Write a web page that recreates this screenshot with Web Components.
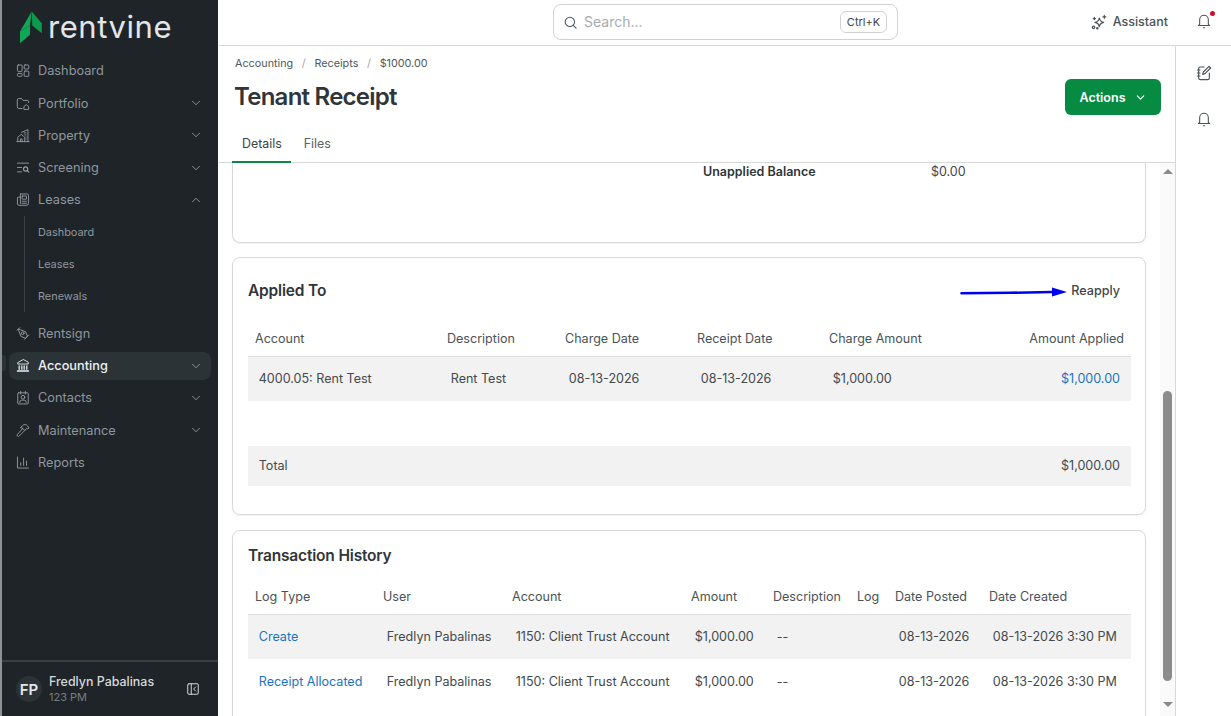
<!DOCTYPE html>
<html lang="en">
<head>
<meta charset="utf-8">
<title>Tenant Receipt</title>
<style>
  html, body { margin: 0; height: 100%; overflow: hidden; background: #fff; }
  body { font-family: Inter, "Liberation Sans", sans-serif; }
</style>
</head>
<body>
<rv-app>
  <rv-sidebar slot="sidebar">
    <rv-nav-item icon="dashboard">Dashboard</rv-nav-item>
    <rv-nav-item icon="portfolio" caret="down">Portfolio</rv-nav-item>
    <rv-nav-item icon="property" caret="down">Property</rv-nav-item>
    <rv-nav-item icon="screening" caret="down">Screening</rv-nav-item>
    <rv-nav-item icon="leases" caret="up">Leases</rv-nav-item>
    <rv-nav-group>
      <rv-nav-sub>Dashboard</rv-nav-sub>
      <rv-nav-sub>Leases</rv-nav-sub>
      <rv-nav-sub>Renewals</rv-nav-sub>
    </rv-nav-group>
    <rv-nav-item icon="rentsign">Rentsign</rv-nav-item>
    <rv-nav-item icon="accounting" caret="down" active>Accounting</rv-nav-item>
    <rv-nav-item icon="contacts" caret="down">Contacts</rv-nav-item>
    <rv-nav-item icon="maintenance" caret="down">Maintenance</rv-nav-item>
    <rv-nav-item icon="reports">Reports</rv-nav-item>
  </rv-sidebar>
  <rv-topbar slot="topbar"></rv-topbar>
  <rv-page-header slot="header"></rv-page-header>
  <rv-scroll-area slot="content">
    <rv-card class="first">
      <rv-balance></rv-balance>
    </rv-card>
    <rv-card heading="Applied To" action="Reapply" head="64" foot="28" style="margin-top:14px">
      <rv-table
        head-height="35"
        head-pad="2"
        cols="192px 118px 132px 132px 1fr 170px"
        align-last="right"
        columns='["Account","Description","Charge Date","Receipt Date","Charge Amount","Amount Applied"]'
        rows='[{"h":44,"fill":1,"up":1,"cells":["4000.05: Rent Test","Rent Test","08-13-2026","08-13-2026","$1,000.00",{"t":"$1,000.00","link":1}]},
               {"h":45,"cells":[]},
               {"h":40,"fill":1,"up":1,"cells":["Total","","","","","$1,000.00"]}]'></rv-table>
    </rv-card>
    <rv-card heading="Transaction History" head="48" foot="60" style="margin-top:15px">
      <rv-table
        head-height="36"
        head-pad="0"
        cols="128px 129px 179px 82px 84px 38px 94px 1fr"
        columns='["Log Type","User","Account","Amount","Description","Log","Date Posted","Date Created"]'
        rows='[{"h":44,"fill":1,"up":1,"cells":[{"t":"Create","link":1},"Fredlyn Pabalinas","1150: Client Trust Account","$1,000.00","--","","08-13-2026","08-13-2026 3:30 PM"]},
               {"h":44,"cells":[{"t":"Receipt Allocated","link":1},"Fredlyn Pabalinas","1150: Client Trust Account","$1,000.00","--","","08-13-2026","08-13-2026 3:30 PM"]}]'></rv-table>
    </rv-card>
  </rv-scroll-area>
  <rv-rail slot="rail"></rv-rail>
</rv-app>

<script>
// stroke icons, all drawn on a 24 box
const ICONS = {
  dashboard: '<rect x="2.500" y="2.500" width="8" height="11" rx="1.500"/><rect x="14" y="2.500" width="8" height="7" rx="1.500"/><rect x="2.500" y="17" width="8" height="5" rx="1.500"/><rect x="14" y="13" width="8" height="9" rx="1.500"/>',
  portfolio: '<path d="M10.500 20.500H5A2.800 2.800 0 0 1 2.200 17.700V6A2.500 2.500 0 0 1 4.700 3.500h4.800l2.500 3.200h7.200A2.500 2.500 0 0 1 21.700 9.200v1.300"/><path d="M13.500 21.500v-4.200l4-3.300 4.300 3.300v4.200z"/>',
  property: '<path d="M1.500 22.500h21"/><path d="M3 22.500v-7.500l6-5 6 5v7.500"/><path d="M7.500 22.500v-4.500h3v4.500"/><path d="M9.500 6.500L20.500 2v20.500"/><path d="M14 7.500h3M15 11h2M17 14.500h.5M17 18h.5"/>',
  screening: '<path d="M2.500 4.500h19M2.500 12h7M2.500 19.500h7"/><circle cx="16.500" cy="14.500" r="3.600" stroke-width="2"/><path d="M19.200 17.200l2.600 2.600" stroke-width="2"/>',
  leases: '<path d="M7.500 2.500h11.500A2.500 2.500 0 0 1 21.500 5v13.500a3.500 3.500 0 0 1-3.500 3.500H5a2.500 2.500 0 0 1-2.500-2.500V9.500A1.500 1.500 0 0 1 4 8h3.500"/><path d="M7.500 2.500V19"/><rect x="10.500" y="6" width="7.500" height="5.500" rx=".6"/><path d="M10.500 15h7.500M10.500 18.500h7.500"/>',
  rentsign: '<path d="M4 4.500l3.500 1 9 3.500 3 7.500-3.500 3.500-7.500-3-3.500-9z"/><circle cx="11.500" cy="11.500" r="2.400"/><path d="M2 6.500L6.500 2M14.500 22l7.500-7.500"/>',
  accounting: '<path d="M12 2L3 7v2.500h18V7z"/><path d="M5.500 12.500v6M10 12.500v6M14 12.500v6M18.500 12.500v6" stroke-width="2.200"/><path d="M2.500 21.500h19" stroke-width="2.500"/>',
  contacts: '<rect x="3" y="4" width="18" height="19" rx="1.500"/><path d="M8 1.500v4.500M16 1.500v4.500"/><circle cx="12" cy="11.500" r="3.200"/><path d="M6.500 20.500v-.5a3.500 3.500 0 0 1 3.500-3.500h4a3.500 3.500 0 0 1 3.500 3.500v.5"/>',
  maintenance: '<path d="M11.500 8.500L2.500 18.500a2 2 0 0 0 3 3l9.500-9.500"/><path d="M8 6.500l5.500-4.500c3.500-.8 6.500.8 8.500 5.500l-1.500 2-2.500-1-3 3.500-3.500-3.500z"/>',
  reports: '<path d="M2.500 2.500v19h19"/><path d="M8 17v-4.500M13 17V4.500M18 17V9.500"/>',
  sparkle: '<path d="M12.500 6c.8 4.200 2.300 5.700 6.500 6.500-4.200.8-5.700 2.300-6.500 6.500-.8-4.200-2.300-5.700-6.500-6.500 4.200-.8 5.700-2.300 6.500-6.500z"/><path d="M20 2v4.500M17.800 4.300h4.500"/><circle cx="3.800" cy="20" r="1.800"/><circle cx="9.500" cy="21.500" r="1"/><path d="M5 5v3.500M3.300 6.800h3.400"/>',
  bell: '<path d="M5.500 17V10a6.500 6.500 0 0 1 13 0v7l2 1.800H3.500z"/><path d="M11 22h2"/>',
  notebook: '<path d="M12 3H6.500A2.500 2.500 0 0 0 4 5.500v14A2.500 2.500 0 0 0 6.500 22h11a2.500 2.500 0 0 0 2.500-2.500V12"/><path d="M2 7.500h4M2 12h4M2 16.500h4"/><path d="M19.500 2l2.500 2.500-8.500 8.500-3.500 1 1-3.500z"/>',
  collapse: '<rect x="3" y="3" width="18" height="18" rx="2"/><path d="M9 3v18"/><path d="M16.500 8.500L13 12l3.500 3.500"/>',
  search: '<circle cx="11" cy="11" r="7.500"/><path d="M16.500 16.500L21 21"/>',
  down: '<path d="M6 9l6 6 6-6"/>',
  up: '<path d="M6 15l6-6 6 6"/>'
};

function icon(name, size, width) {
  return `<svg width="${size}" height="${size}" viewBox="0 0 24 24" fill="none" stroke="currentColor" stroke-width="${width || 1.5}" stroke-linecap="round" stroke-linejoin="round">${ICONS[name]}</svg>`;
}

class RvApp extends HTMLElement {
  constructor() {
    super();
    this.attachShadow({ mode: 'open' });
    this.shadowRoot.innerHTML = `
      <style>
        :host {
          display: grid;
          grid-template-columns: 219px 1fr 56px;
          grid-template-rows: 46px 117px 1fr;
          width: 1231px;
          height: 716px;
          overflow: hidden;
        }
        ::slotted([slot=sidebar]) { grid-column: 1; grid-row: 1 / 4; }
        ::slotted([slot=topbar]) { grid-column: 2 / 4; grid-row: 1; }
        ::slotted([slot=header]) { grid-column: 2; grid-row: 2; }
        ::slotted([slot=content]) { grid-column: 2; grid-row: 3; }
        ::slotted([slot=rail]) { grid-column: 3; grid-row: 2 / 4; }
      </style>
      <slot name="sidebar"></slot>
      <slot name="topbar"></slot>
      <slot name="header"></slot>
      <slot name="content"></slot>
      <slot name="rail"></slot>`;
  }
}

class RvSidebar extends HTMLElement {
  constructor() {
    super();
    this.attachShadow({ mode: 'open' });
    this.shadowRoot.innerHTML = `
      <style>
        :host {
          display: flex;
          flex-direction: column;
          background: #1e2428;
          border-left: 2px solid #8f9294;
          border-right: 1px solid #fff;
          box-sizing: border-box;
          color: #8f979f;
          font-size: 12.750px;
          overflow: hidden;
        }
        .logo { height: 54.600px; flex: none; display: flex; align-items: center; gap: 6px; padding-left: 18px; box-sizing: border-box; }
        .word { font-size: 31px; font-weight: 400; line-height: 34px; color: #e3e6e8; letter-spacing: .55px; margin-top: -1px; }
        .foot {
          margin-top: auto;
          height: 56px;
          box-sizing: border-box;
          border-top: 2px solid #3a4044;
          display: flex;
          align-items: center;
          padding: 0 18px 0 14px;
        }
        .avatar {
          width: 26px; height: 26px; border-radius: 50%;
          background: #2b3336; color: #e4e6e8;
          font-size: 15px; font-weight: 600;
          display: flex; align-items: center; justify-content: center;
          margin-right: 7px;
        }
        .who { flex: 1; display: flex; flex-direction: column; }
        .name { font-size: 12.450px; line-height: 16px; font-weight: 500; color: #d6d9db; }
        .role { font-size: 11px; line-height: 15px; color: #767e84; }
        .foot svg { color: #d6d9db; }
      </style>
      <div class="logo">
        <svg width="22" height="33" viewBox="0 0 22 33">
          <path d="M11.700 0.500L21.800 12.200V22.200L12.300 14.500z" fill="#0d9a4e"/>
          <path d="M11.700 0.500L0 20.500 10 14.500z" fill="#0fa756"/>
          <path d="M0 20.500L10 14.500V23.800L0 32.200z" fill="#0fa756"/>
        </svg>
        <span class="word">rentvine</span>
      </div>
      <slot></slot>
      <div class="foot">
        <div class="avatar">FP</div>
        <div class="who"><span class="name">Fredlyn Pabalinas</span><span class="role">123 PM</span></div>
        ${icon('collapse', 14, 1.7)}
      </div>`;
  }
}

class RvNavItem extends HTMLElement {
  constructor() {
    super();
    this.attachShadow({ mode: 'open' });
  }
  connectedCallback() {
    const caret = this.getAttribute('caret');
    const active = this.hasAttribute('active');
    this.shadowRoot.innerHTML = `
      <style>
        :host { display: block; height: 32.300px; position: relative; padding: 2.150px 7px 0 7px; box-sizing: border-box; }
        .row {
          height: 28px; display: flex; align-items: center; border-radius: 8px;
          padding: 0 8px 0 7px; gap: 8px;
          ${active ? 'background: #2b3336; color: #eef0f1; font-weight: 500;' : ''}
        }
        .label { flex: 1; }
        .ic { display: flex; width: 14px; justify-content: center; color: ${active ? '#eef0f1' : '#9aa1a6'}; }
        .car { display: flex; color: #9aa1a6; }
        .tick { position: absolute; left: 0; top: 6px; width: 4px; height: 16px; background: #2b3336; border-radius: 0 3px 3px 0; }
      </style>
      ${active ? '<span class="tick"></span>' : ''}
      <div class="row">
        <span class="ic">${icon(this.getAttribute('icon'), 15)}</span>
        <span class="label"><slot></slot></span>
        ${caret ? `<span class="car">${icon(caret, 14, 1.5)}</span>` : ''}
      </div>`;
  }
}

class RvNavGroup extends HTMLElement {
  constructor() {
    super();
    this.attachShadow({ mode: 'open' });
    this.shadowRoot.innerHTML = `
      <style>
        :host { display: block; margin: 0 0 5px 22px; border-left: 1px solid #3a4044; padding-left: 13px; }
      </style>
      <slot></slot>`;
  }
}

class RvNavSub extends HTMLElement {
  constructor() {
    super();
    this.attachShadow({ mode: 'open' });
    this.shadowRoot.innerHTML = `
      <style>
        :host { display: flex; align-items: center; height: 32px; box-sizing: border-box; font-size: 10.900px; color: #8f979f; }
      </style>
      <slot></slot>`;
  }
}

class RvTopbar extends HTMLElement {
  constructor() {
    super();
    this.attachShadow({ mode: 'open' });
    this.shadowRoot.innerHTML = `
      <style>
        :host {
          display: flex; align-items: center; position: relative;
          height: 46px; box-sizing: border-box;
          border-bottom: 1px solid #d6d8da;
          padding: 0 19px 0 334px;
          background: #fff; color: #4b5257;
        }
        .search {
          width: 345px; height: 36px; box-sizing: border-box;
          border: 1px solid #cfd3d6; border-radius: 8px;
          display: flex; align-items: center;
          padding: 0 10px 0 9px; gap: 6px;
          margin-top: -1px;
        }
        .search svg { color: #51585d; }
        .ph { flex: 1; font-size: 14px; line-height: 16px; padding-bottom: 1px; color: #a6acb1; }
        .kbd {
          width: 47px; height: 22px; box-sizing: border-box;
          border: 1px solid #cfd3d6; border-radius: 6px;
          font-size: 11px; color: #3d4347;
          display: flex; align-items: center; justify-content: center;
        }
        .right { margin-left: auto; display: flex; align-items: center; }
        .asst { display: flex; align-items: center; gap: 6px; font-size: 12.500px; font-weight: 500; margin-right: 28px; margin-top: -2px; }
        .bell { position: relative; display: flex; margin-top: -3px; }
        .dot { position: absolute; right: -3px; top: -2px; width: 5px; height: 5px; border-radius: 50%; background: #c8102e; }
      </style>
      <div class="search">
        ${icon('search', 15, 1.7)}
        <span class="ph">Search...</span>
        <span class="kbd">Ctrl+K</span>
      </div>
      <div class="right">
        <span class="asst">${icon('sparkle', 16, 1.800)}Assistant</span>
        <span class="bell">${icon('bell', 16, 1.600)}<span class="dot"></span></span>
      </div>`;
  }
}

class RvPageHeader extends HTMLElement {
  constructor() {
    super();
    this.attachShadow({ mode: 'open' });
    this.shadowRoot.innerHTML = `
      <style>
        :host {
          display: flex; flex-direction: column;
          height: 117px; box-sizing: border-box;
          border-bottom: 1px solid #d6d8da;
          color: #2f3539;
        }
        .crumbs {
          display: flex; gap: 8.700px; align-items: center;
          height: 17px; margin: 9px 0 0 16px;
          font-size: 10.800px; line-height: 15px; color: #50575c;
        }
        .sep { color: #a0a6aa; }
        .mid { display: flex; align-items: center; justify-content: space-between; height: 36px; margin: 7px 14px 0 15px; }
        h1 { margin: 0; font-size: 24px; line-height: 32px; font-weight: 600; letter-spacing: -.75px; color: #2f3539; }
        .btn {
          width: 96px; height: 36px; border-radius: 6px;
          background: #078a42; color: #fff;
          font-size: 12.500px; font-weight: 600;
          display: flex; align-items: center; justify-content: center; gap: 8px;
        }
        nav { display: flex; margin: auto 0 0 13px; }
        .tab {
          height: 37px; box-sizing: border-box;
          padding: 0 10px; font-size: 12.400px; color: #596066;
          display: flex; align-items: center;
          margin-bottom: -1px;
          border-bottom: 2px solid transparent;
        }
        .tab.on { border-bottom-color: #078a42; color: #3d4347; padding: 0 9px 0 10px; }
        .tab + .tab { margin-left: 3px; }
      </style>
      <div class="crumbs">
        <span>Accounting</span><span class="sep">/</span>
        <span>Receipts</span><span class="sep">/</span>
        <span>$1000.00</span>
      </div>
      <div class="mid">
        <h1>Tenant Receipt</h1>
        <div class="btn">Actions ${icon('down', 13, 2)}</div>
      </div>
      <nav>
        <div class="tab on">Details</div>
        <div class="tab">Files</div>
      </nav>`;
  }
}

class RvScrollArea extends HTMLElement {
  constructor() {
    super();
    this.attachShadow({ mode: 'open' });
    this.shadowRoot.innerHTML = `
      <style>
        :host { display: flex; min-height: 0; overflow: hidden; background: #fff; }
        .pane { flex: 1; min-width: 0; overflow: hidden; padding: 0 14px 0 13px; }
        .track {
          width: 15px; background: #fafafa;
          display: flex; flex-direction: column; align-items: center;
        }
        .arr { width: 0; height: 0; border-left: 5px solid transparent; border-right: 5px solid transparent; }
        .arr.up { margin-top: 6px; border-bottom: 5px solid #8a8a8a; }
        .arr.dn { margin-top: 21px; border-top: 5px solid #8a8a8a; }
        .thumb { width: 9px; height: 290px; margin-top: 217px; border-radius: 5px; background: #8c8c8c; }
      </style>
      <div class="pane"><slot></slot></div>
      <div class="track">
        <span class="arr up"></span>
        <span class="thumb"></span>
        <span class="arr dn"></span>
      </div>`;
  }
}

class RvCard extends HTMLElement {
  constructor() {
    super();
    this.attachShadow({ mode: 'open' });
  }
  connectedCallback() {
    const first = this.classList.contains('first');
    const heading = this.getAttribute('heading');
    const action = this.getAttribute('action');
    const head = this.getAttribute('head') || 0;
    const foot = this.getAttribute('foot') || 0;
    this.shadowRoot.innerHTML = `
      <style>
        :host {
          display: block; position: relative;
          border: 1px solid #d6d8da;
          ${first ? 'border-top: 0; border-radius: 0 0 8px 8px; height: 80px;' : 'border-radius: 8px;'}
          box-shadow: 0 1px 2px rgba(0,0,0,.06);
          box-sizing: border-box;
          padding: 0 14px 0 15px;
          color: #3f4549; font-size: 13px;
        }
        .head { height: ${head}px; display: flex; align-items: center; justify-content: space-between; }
        h2 { margin: 0; font-size: 15.500px; font-weight: 600; color: #2f3539; letter-spacing: -.18px; }
        .act { margin-right: 11px; font-weight: 500; font-size: 12.600px; color: #3f4549; }
        .foot { height: ${foot}px; }
        .note { position: absolute; left: 727px; top: 28px; }
      </style>
      ${heading ? `<div class="head"><h2>${heading}</h2>${action ? `<span class="act">${action}</span>` : ''}</div>` : ''}
      ${action ? `<svg class="note" width="108" height="12" viewBox="0 0 108 12"><path d="M1.500 7.200L50 6.800 92 6" stroke="#0000f0" stroke-width="2.600" fill="none" stroke-linecap="round"/><path d="M92 1.500L107 6 92 10.500z" fill="#0000f0"/></svg>` : ''}
      <slot></slot>
      <div class="foot"></div>`;
  }
}

class RvBalance extends HTMLElement {
  constructor() {
    super();
    this.attachShadow({ mode: 'open' });
    this.shadowRoot.innerHTML = `
      <style>
        :host { display: flex; padding: 0 0 0 455px; height: 17px; line-height: 17px; font-size: 12.500px; color: #3f4549; }
        b { width: 228px; font-weight: 600; color: #2f3539; }
      </style>
      <b>Unapplied Balance</b><span>$0.00</span>`;
  }
}

class RvTable extends HTMLElement {
  constructor() {
    super();
    this.attachShadow({ mode: 'open' });
  }
  connectedCallback() {
    const cols = this.getAttribute('cols');
    const columns = JSON.parse(this.getAttribute('columns'));
    const rows = JSON.parse(this.getAttribute('rows'));
    const rightLast = this.getAttribute('align-last') === 'right';
    const pad = this.getAttribute('head-pad') || 0;
    const cell = (c, i) => {
      const t = typeof c === 'string' ? c : c.t;
      const cls = [typeof c === 'object' && c.link ? 'link' : '', rightLast && i === columns.length - 1 ? 'r' : ''].join(' ');
      return `<div class="td ${cls}">${t}</div>`;
    };
    this.shadowRoot.innerHTML = `
      <style>
        :host { display: block; font-size: 12.550px; color: #43494d; }
        .tr { display: grid; grid-template-columns: ${cols}; align-items: center; }
        .th { padding: 0 0 ${pad}px 7px; color: #4b5257; white-space: nowrap; }
        .th.r { text-align: right; padding: 0 7px ${pad}px 0; }
        .td { padding-left: 10.750px; white-space: nowrap; }
        .td.r { text-align: right; padding: 0 11px 0 0; }
        .up .td { padding-bottom: 2px; }
        .hd { height: ${this.getAttribute('head-height')}px; box-sizing: border-box; border-bottom: 1px solid #dcdee0; }
        .fill { background: #f2f2f2; }
        .link { color: #1a74c4; }
      </style>
      <div class="tr hd">
        ${columns.map((c, i) => `<div class="th ${rightLast && i === columns.length - 1 ? 'r' : ''}">${c}</div>`).join('')}
      </div>
      ${rows.map(r => `
        <div class="tr ${r.fill ? 'fill' : ''} ${r.up ? 'up' : ''}" style="height:${r.h}px">
          ${r.cells.map(cell).join('')}
        </div>`).join('')}`;
  }
}

class RvRail extends HTMLElement {
  constructor() {
    super();
    this.attachShadow({ mode: 'open' });
    this.shadowRoot.innerHTML = `
      <style>
        :host {
          display: flex; flex-direction: column; align-items: center; gap: 30px;
          box-sizing: border-box; border-left: 1px solid #d6d8da;
          padding-top: 19px; color: #4b5257; background: #fff;
        }
        span { display: flex; }
      </style>
      <span>${icon('notebook', 16, 1.700)}</span>
      <span>${icon('bell', 16, 1.600)}</span>`;
  }
}

customElements.define('rv-app', RvApp);
customElements.define('rv-sidebar', RvSidebar);
customElements.define('rv-nav-item', RvNavItem);
customElements.define('rv-nav-group', RvNavGroup);
customElements.define('rv-nav-sub', RvNavSub);
customElements.define('rv-topbar', RvTopbar);
customElements.define('rv-page-header', RvPageHeader);
customElements.define('rv-scroll-area', RvScrollArea);
customElements.define('rv-card', RvCard);
customElements.define('rv-balance', RvBalance);
customElements.define('rv-table', RvTable);
customElements.define('rv-rail', RvRail);
</script>
</body>
</html>
